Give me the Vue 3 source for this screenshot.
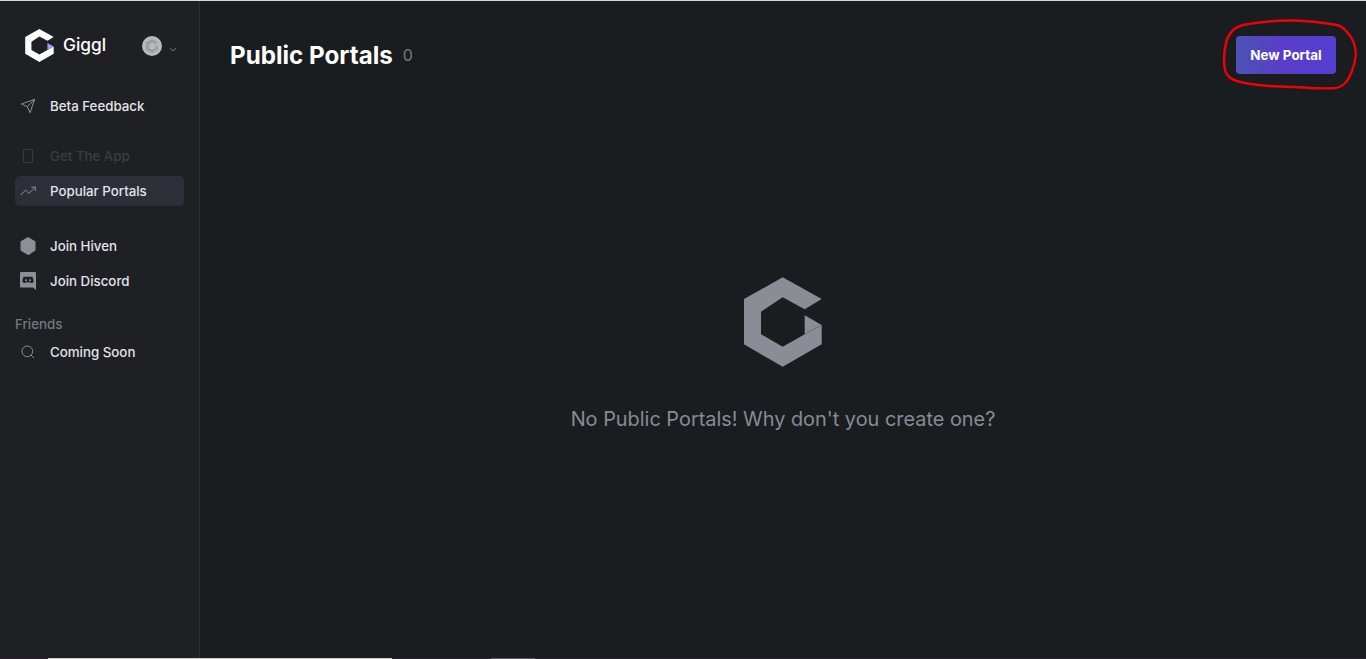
<template>
  <div class="page">
    <div class="top-line"></div>

    <div class="shell">
      <aside class="sidebar">
        <div class="brand">
          <svg class="brand-logo" viewBox="0 0 78 90">
            <path fill="#fff" :d="logoBody" />
            <path fill="#a49cf2" :d="logoNotch" />
          </svg>
          <span class="brand-name">Giggl</span>
          <span class="avatar">
            <svg viewBox="0 0 78 90" width="12" height="14">
              <path fill="#9b9ca2" :d="logoBody" />
              <path fill="#9b9ca2" :d="logoNotch" />
            </svg>
          </span>
          <svg class="chevron" viewBox="0 0 8 5" width="8" height="5">
            <path d="M1 1l3 3 3-3" fill="none" stroke="#73767e" stroke-width="1" />
          </svg>
        </div>

        <nav class="group first">
          <a class="nav-item">
            <svg class="icon" viewBox="0 0 24 24" fill="none" stroke="currentColor" stroke-width="1.5" stroke-linejoin="round">
              <path d="M22 2L11 13" />
              <path d="M22 2l-7 20-4-9-9-4z" />
            </svg>
            <span>Beta Feedback</span>
          </a>
        </nav>

        <nav class="group second">
          <a class="nav-item disabled">
            <svg class="icon" viewBox="0 0 24 24" fill="none" stroke="currentColor" stroke-width="1.5">
              <rect x="5" y="2" width="14" height="20" rx="2" />
              <path d="M12 18h.01" />
            </svg>
            <span>Get The App</span>
          </a>
          <a class="nav-item active">
            <svg class="icon" viewBox="0 0 24 24" fill="none" stroke="currentColor" stroke-width="1.5" stroke-linejoin="round">
              <path d="M23 6l-9.5 9.5-5-5L1 18" />
              <path d="M17 6h6v6" />
            </svg>
            <span>Popular Portals</span>
          </a>
        </nav>

        <nav class="group third">
          <a class="nav-item">
            <svg class="icon tall" viewBox="0 0 16 18">
              <path fill="currentColor" d="M8 0l7.500 4.500v9L11 16.200l-.6 1L8 18l-7.500-4.500v-9z" />
            </svg>
            <span>Join Hiven</span>
          </a>
          <a class="nav-item">
            <svg class="icon tall" viewBox="0 0 16 18">
              <path fill="currentColor" d="M1 0h14a1 1 0 0 1 1 1v17l-3-2.600H1a1 1 0 0 1-1-1V1a1 1 0 0 1 1-1z" />
              <path fill="#1f2024" d="M5.600 4.400c-1 .1-1.800.4-2.100.7C2.800 6.300 2.400 8 2.400 10c.7.8 1.800 1.200 2.900 1.200l.6-.8c-.4-.1-.8-.3-1.100-.6 1.800 1 4.600 1 6.400 0-.3.3-.7.5-1.100.6l.6.8c1.100 0 2.200-.4 2.900-1.200 0-2-.4-3.700-1.100-4.900-.3-.3-1.100-.6-2.100-.7l-.3.5c-1.400-.2-2.800-.2-4.200 0z" />
              <circle cx="6" cy="8.200" r="1" fill="#8d8f96" />
              <circle cx="10" cy="8.200" r="1" fill="#8d8f96" />
            </svg>
            <span>Join Discord</span>
          </a>
        </nav>

        <div class="section-label">Friends</div>
        <a class="nav-item">
          <svg class="icon" viewBox="0 0 24 24" fill="none" stroke="currentColor" stroke-width="1.500">
            <circle cx="11" cy="11" r="8" />
            <path d="M21 21l-4.350-4.350" />
          </svg>
          <span>Coming Soon</span>
        </a>
      </aside>

      <main class="main">
        <header class="header">
          <div class="heading">
            <h1>Public Portals</h1>
            <span class="count">{{ portals.length }}</span>
          </div>
          <button class="new-portal">New Portal</button>
        </header>

        <section class="empty">
          <svg class="empty-logo" viewBox="0 0 78 90">
            <path fill="#8a8d96" :d="logoBody" />
            <path fill="#8a8d96" :d="logoNotch" />
            <path stroke="#6d7078" stroke-width="0.6" d="M60.700 57.300L77.700 48" />
          </svg>
          <p>No Public Portals! Why don't you create one?</p>
        </section>
      </main>
    </div>

    <div class="bottom-strip">
      <span class="strip-light"></span>
      <span class="strip-tab"></span>
    </div>

    <!-- hand drawn annotation round the button -->
    <svg class="scribble" viewBox="0 0 1366 659" width="1366" height="659">
      <path
        fill="none"
        stroke="#f00008"
        stroke-width="2.400"
        stroke-linejoin="round"
        d="M1336.700 25C1325 23 1312 21 1300 20.700C1288 20.300 1277 20.500 1266.700 21.700C1257 22.600 1250 23.500 1243 25C1238 26.500 1234 28.500 1231.700 31.700C1228 36 1226.500 40 1226 43C1224.500 49 1224 55 1224 60C1224 66 1225 71 1226.700 74C1229 77.500 1232 79.500 1236.700 81C1246 83.500 1256 85 1266.700 85.700C1278 86.500 1289 87 1300 87.300C1312 88 1323 88.800 1333 88.300C1338 88 1342 86.500 1345 83.300C1348 80 1350 76 1351.700 71.700C1353.500 67 1355 62 1355.700 56.700C1356 52 1355.500 47.500 1354 43.300C1352.500 39 1350 35 1346.700 31.700C1344 28 1340.500 26 1336.700 25Z"
      />
    </svg>
  </div>
</template>

<script setup>
import { ref } from "vue";

const logoBody =
  "M38.700 .3L77.700 22 60.700 32.300 38.700 20.300 17 34.700V57.300L38.700 69.700 60.700 57.300 77.700 48V67.300L38.700 89.700 0 67.300V22z";
const logoNotch = "M60.700 38.300L77.700 48 60.700 57.300z";

const portals = ref([]);
</script>

<style>
html,
body {
  margin: 0;
  background: #1a1d20;
  overflow: hidden;
}
</style>

<style scoped>
.page {
  position: relative;
  display: flex;
  flex-direction: column;
  width: 1366px;
  height: 659px;
  font-family: Inter, "Liberation Sans", sans-serif;
  color: #e2e4ea;
}

.top-line {
  height: 1px;
  background: #d9d9d9;
}

.shell {
  flex: 1;
  display: flex;
  min-height: 0;
}

.bottom-strip {
  display: flex;
  height: 1px;
  padding-left: 48px;
  background: #2a2430;
}

.strip-light {
  width: 344px;
  background: #cfcfcc;
}

.strip-tab {
  width: 44px;
  margin-left: 99px;
  background: #5d5862;
}

.sidebar {
  width: 200px;
  flex-shrink: 0;
  box-sizing: border-box;
  padding: 0 15px;
  background: #1f2024;
  border-right: 1px solid #2c2d32;
}

.brand {
  display: flex;
  align-items: center;
  height: 90px;
  padding-left: 10px;
}

.brand-logo {
  width: 29px;
  height: 33px;
  margin-top: -2px;
}

.brand-name {
  margin: -3px 0 0 9px;
  font-size: 17.3px;
  font-weight: 500;
  color: #fff;
}

.avatar {
  display: flex;
  align-items: center;
  justify-content: center;
  width: 20px;
  height: 20px;
  margin-left: 36px;
  border-radius: 50%;
  background: #b9b9b9;
}

.chevron {
  margin: 7px 0 0 7px;
}

.group {
  display: flex;
  flex-direction: column;
  gap: 5px;
}

.second {
  margin-top: 20px;
}

.third {
  margin-top: 25px;
}

.nav-item {
  display: flex;
  align-items: center;
  height: 30px;
  padding-left: 5px;
  border-radius: 5px;
  font-size: 13.3px;
  font-weight: 500;
  color: #e2e4ea;
}

.nav-item .icon {
  width: 16px;
  height: 16px;
  flex-shrink: 0;
  margin-right: 14px;
  color: #8d8f96;
}

.nav-item .icon.tall {
  height: 18px;
}

.nav-item.active {
  background: #2c2f38;
}

.nav-item.disabled,
.nav-item.disabled .icon {
  color: #3b3d43;
}

.section-label {
  margin-top: 18px;
  height: 23px;
  line-height: 20px;
  font-size: 13.3px;
  font-weight: 500;
  color: #757880;
}

.main {
  flex: 1;
  display: flex;
  flex-direction: column;
  background: #1a1d20;
}

.header {
  display: flex;
  align-items: center;
  justify-content: space-between;
  padding: 35px 30px 0;
}

.heading {
  display: flex;
  align-items: center;
  gap: 10px;
}

.heading h1 {
  margin: 0;
  font-size: 24.2px;
  font-weight: 700;
  color: #fff;
}

.count {
  font-size: 16px;
  color: #777a81;
}

.new-portal {
  width: 100px;
  height: 38px;
  border: none;
  border-radius: 4px;
  background: linear-gradient(90deg, #4a53b4, #5a3dc9 45%, #533fd2);
  font: 700 13.4px Inter, "Liberation Sans", sans-serif;
  color: #fff;
}

.empty {
  display: flex;
  flex-direction: column;
  align-items: center;
  padding-top: 203px;
}

.empty-logo {
  width: 78px;
  height: 90px;
}

.empty p {
  margin: 40px 0 0;
  font-size: 19.9px;
  line-height: 24px;
  color: #878b95;
}

.scribble {
  position: absolute;
  top: 0;
  left: 0;
  pointer-events: none;
}
</style>
